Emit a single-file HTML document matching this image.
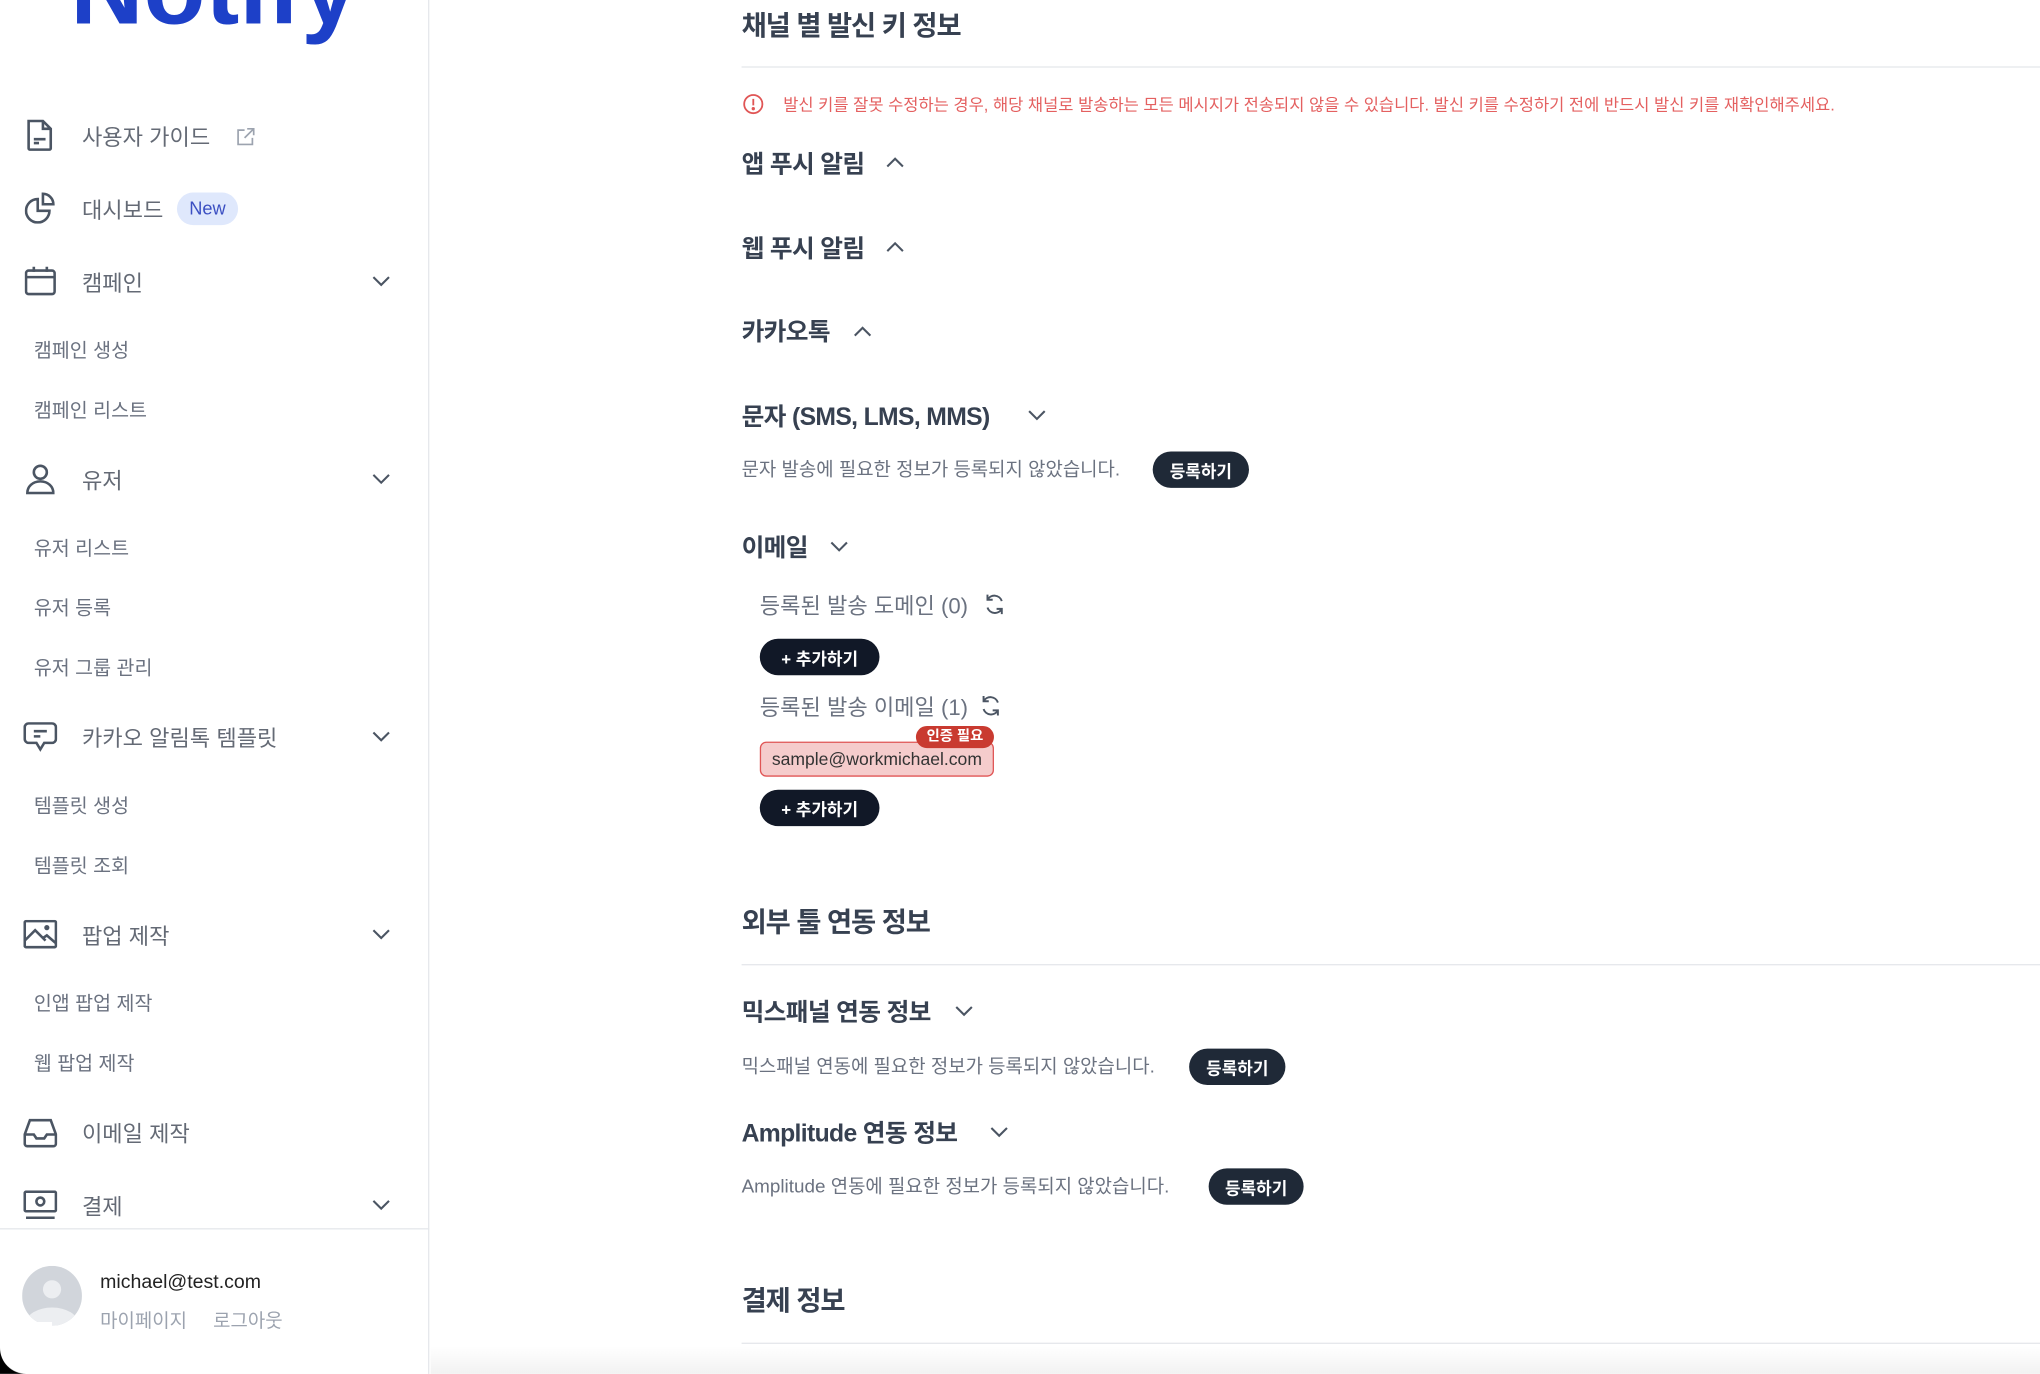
<!DOCTYPE html>
<html><head><meta charset="utf-8"><style>
*{margin:0;padding:0;box-sizing:border-box}
html,body{width:2040px;height:1374px;overflow:hidden;background:#fff}
#w{position:absolute;left:0;top:0;width:1568px;height:1056px;transform:scale(1.30102);transform-origin:0 0;font-family:"Liberation Sans","Noto Sans CJK KR",sans-serif;}
.a{position:absolute;white-space:nowrap}
.side{position:absolute;left:0;top:0;width:330px;height:1056px;border-right:1px solid #e5e7eb}
.logo{left:54px;top:-54px;font-size:78px;font-weight:bold;color:#1d40c8;letter-spacing:0px}
.mi{left:63px;font-size:17px;color:#646a75;transform:translateY(-50%)}
.sub{left:26px;font-size:15px;color:#6b7280;transform:translateY(-50%)}
.ic{position:absolute;transform:translateY(-50%)}
.chev{position:absolute;left:285px;transform:translateY(-50%)}
.h1{left:570px;font-size:21px;font-weight:bold;color:#374151;transform:translateY(-50%);letter-spacing:-0.8px}
.h2{left:570px;font-size:19px;font-weight:bold;color:#374151;transform:translateY(-50%);letter-spacing:-0.5px}
.line{position:absolute;left:570px;right:0;height:1px;background:#e5e7eb}
.t{font-size:14.5px;color:#6b7280;transform:translateY(-50%)}
.btn{position:absolute;height:28px;border-radius:14px;background:#1f2937;color:#fff;font-size:13px;font-weight:bold;display:flex;align-items:center;justify-content:center}
.btn2{background:#111827}
</style></head><body><div id="w">
<div class="side"></div>
<div class="a logo">Notify</div>

<svg class="ic" style="left:20px;top:104px" width="22" height="26" viewBox="0 0 22 26" fill="none" stroke="#4b5563" stroke-width="2"><path d="M2 2h11l6 6v15a1 1 0 0 1-1 1H3a1 1 0 0 1-1-1z"/><path d="M13 2v6h6M6 16h9M6 19h4"/></svg>
<div class="a mi" style="top:104px">사용자 가이드</div>
<svg class="ic" style="left:182px;top:105px" width="14" height="14" viewBox="0 0 14 14" fill="none" stroke="#9ca3af" stroke-width="1.3"><path d="M6 2H1v11h11V8M8 1h5v5M13 1L6 8"/></svg>

<svg class="ic" style="left:19px;top:160px" width="24" height="24" viewBox="0 0 24 24" fill="none" stroke="#4b5563" stroke-width="2"><path d="M10 5a9 9 0 1 0 9 9h-9z"/><path d="M14 1a8 8 0 0 1 8 8h-8z"/></svg>
<div class="a mi" style="top:160px">대시보드</div>
<div class="a" style="left:136px;top:148px;width:47px;height:25px;border-radius:13px;background:#dfe8fc;color:#3b4fc2;font-size:14px;text-align:center;line-height:25px">New</div>

<svg class="ic" style="left:19px;top:216px" width="24" height="24" viewBox="0 0 24 24" fill="none" stroke="#4b5563" stroke-width="2"><rect x="1" y="4" width="22" height="18" rx="2"/><path d="M1 9h22M7 1v4M17 1v4"/></svg>
<div class="a mi" style="top:216px">캠페인</div>
<svg class="chev" style="top:216px" width="16" height="10" viewBox="0 0 16 10" fill="none" stroke="#4b5563" stroke-width="1.6"><path d="M2 2l6 6 6-6"/></svg>
<div class="a sub" style="top:269px">캠페인 생성</div>
<div class="a sub" style="top:315px">캠페인 리스트</div>

<svg class="ic" style="left:20px;top:368px" width="22" height="24" viewBox="0 0 22 24" fill="none" stroke="#4b5563" stroke-width="2"><circle cx="11" cy="7" r="5"/><path d="M1 23c0-5 4-9 10-9s10 4 10 9z"/></svg>
<div class="a mi" style="top:368px">유저</div>
<svg class="chev" style="top:368px" width="16" height="10" viewBox="0 0 16 10" fill="none" stroke="#4b5563" stroke-width="1.6"><path d="M2 2l6 6 6-6"/></svg>
<div class="a sub" style="top:421px">유저 리스트</div>
<div class="a sub" style="top:467px">유저 등록</div>
<div class="a sub" style="top:513px">유저 그룹 관리</div>

<svg class="ic" style="left:18px;top:567px" width="26" height="24" viewBox="0 0 26 24" fill="none" stroke="#4b5563" stroke-width="2"><path d="M4 1h18a3 3 0 0 1 3 3v9a3 3 0 0 1-3 3h-6l-3 5-3-5H4a3 3 0 0 1-3-3V4a3 3 0 0 1 3-3z"/><path d="M8 7h10M8 11h5"/></svg>
<div class="a mi" style="top:566px">카카오 알림톡 템플릿</div>
<svg class="chev" style="top:566px" width="16" height="10" viewBox="0 0 16 10" fill="none" stroke="#4b5563" stroke-width="1.6"><path d="M2 2l6 6 6-6"/></svg>
<div class="a sub" style="top:619px">템플릿 생성</div>
<div class="a sub" style="top:665px">템플릿 조회</div>

<svg class="ic" style="left:18px;top:718px" width="26" height="22" viewBox="0 0 26 22" fill="none" stroke="#4b5563" stroke-width="2"><rect x="1" y="1" width="24" height="20" rx="1"/><path d="M1 16l8-8 8 8M15 14l3-2 7 6"/><circle cx="18" cy="6" r="1" fill="#4b5563"/></svg>
<div class="a mi" style="top:718px">팝업 제작</div>
<svg class="chev" style="top:718px" width="16" height="10" viewBox="0 0 16 10" fill="none" stroke="#4b5563" stroke-width="1.6"><path d="M2 2l6 6 6-6"/></svg>
<div class="a sub" style="top:771px">인앱 팝업 제작</div>
<div class="a sub" style="top:817px">웹 팝업 제작</div>

<svg class="ic" style="left:18px;top:871px" width="26" height="24" viewBox="0 0 26 24" fill="none" stroke="#4b5563" stroke-width="2"><path d="M5 2h16l4 11v7a2 2 0 0 1-2 2H3a2 2 0 0 1-2-2v-7z"/><path d="M1 13h7l2 3h6l2-3h7"/></svg>
<div class="a mi" style="top:870px">이메일 제작</div>

<svg class="ic" style="left:18px;top:927px" width="26" height="24" viewBox="0 0 26 24" fill="none" stroke="#4b5563" stroke-width="2"><rect x="1" y="1" width="24" height="15" rx="1"/><circle cx="13" cy="8.5" r="3"/><path d="M2 21h22"/></svg>
<div class="a mi" style="top:926px">결제</div>
<svg class="chev" style="top:926px" width="16" height="10" viewBox="0 0 16 10" fill="none" stroke="#4b5563" stroke-width="1.6"><path d="M2 2l6 6 6-6"/></svg>

<div class="a" style="left:0;top:944px;width:330px;height:1px;background:#e5e7eb"></div>
<svg class="a" style="left:17px;top:973px" width="46" height="46" viewBox="0 0 46 46"><defs><clipPath id="c"><circle cx="23" cy="23" r="23"/></clipPath></defs><circle cx="23" cy="23" r="23" fill="#d1d5db"/><g clip-path="url(#c)" fill="#eceef1"><circle cx="23" cy="18" r="7"/><ellipse cx="23" cy="44" rx="20" ry="12"/></g></svg>
<div class="a" style="left:77px;top:977px;font-size:15px;color:#222">michael@test.com</div>
<div class="a" style="left:77px;top:1004px;font-size:14.5px;color:#9ca3af">마이페이지 &nbsp;&nbsp;&nbsp;&nbsp;로그아웃</div>

<!-- main -->
<div class="a h1" style="top:19px">채널 별 발신 키 정보</div>
<div class="line" style="top:51px"></div>
<svg class="a" style="left:571px;top:72px" width="16" height="16" viewBox="0 0 16 16" fill="none" stroke="#e05555" stroke-width="1.4"><circle cx="8" cy="8" r="7"/><path d="M8 4v5"/><circle cx="8" cy="11.5" r=".6" fill="#e05555"/></svg>
<div class="a" style="left:602px;top:70px;font-size:12.7px;color:#e46060">발신 키를 잘못 수정하는 경우, 해당 채널로 발송하는 모든 메시지가 전송되지 않을 수 있습니다. 발신 키를 수정하기 전에 반드시 발신 키를 재확인해주세요.</div>

<div class="a h2" style="top:125px">앱 푸시 알림</div>
<svg class="a" style="left:681px;top:120px" width="14" height="9" viewBox="0 0 14 9" fill="none" stroke="#4b5563" stroke-width="1.6"><path d="M1 8l6-6 6 6"/></svg>
<div class="a h2" style="top:190px">웹 푸시 알림</div>
<svg class="a" style="left:681px;top:185px" width="14" height="9" viewBox="0 0 14 9" fill="none" stroke="#4b5563" stroke-width="1.6"><path d="M1 8l6-6 6 6"/></svg>
<div class="a h2" style="top:254px">카카오톡</div>
<svg class="a" style="left:656px;top:250px" width="14" height="9" viewBox="0 0 14 9" fill="none" stroke="#4b5563" stroke-width="1.6"><path d="M1 8l6-6 6 6"/></svg>
<div class="a h2" style="top:319px">문자 (SMS, LMS, MMS)</div>
<svg class="a" style="left:790px;top:315px" width="14" height="9" viewBox="0 0 14 9" fill="none" stroke="#4b5563" stroke-width="1.6"><path d="M1 1l6 6 6-6"/></svg>
<div class="a t" style="left:570px;top:360px">문자 발송에 필요한 정보가 등록되지 않았습니다.</div>
<div class="btn" style="left:886px;top:347px;width:74px">등록하기</div>

<div class="a h2" style="top:420px">이메일</div>
<svg class="a" style="left:638px;top:416px" width="14" height="9" viewBox="0 0 14 9" fill="none" stroke="#4b5563" stroke-width="1.6"><path d="M1 1l6 6 6-6"/></svg>
<div class="a t" style="left:584px;top:464px;font-size:17px">등록된 발송 도메인 (0)</div>
<svg class="a" style="left:756px;top:456px" width="17" height="17" viewBox="0 0 17 17" fill="none" stroke="#4b5563" stroke-width="1.5"><path d="M14 6A6 6 0 0 0 3 5M3 1v4h4M3 11a6 6 0 0 0 11 1M14 16v-4h-4"/></svg>
<div class="btn btn2" style="left:584px;top:491px;width:92px">+ 추가하기</div>
<div class="a t" style="left:584px;top:542px;font-size:17px">등록된 발송 이메일 (1)</div>
<svg class="a" style="left:753px;top:534px" width="17" height="17" viewBox="0 0 17 17" fill="none" stroke="#4b5563" stroke-width="1.5"><path d="M14 6A6 6 0 0 0 3 5M3 1v4h4M3 11a6 6 0 0 0 11 1M14 16v-4h-4"/></svg>
<div class="a" style="left:584px;top:570px;width:180px;height:27px;background:#f5cccc;border:1px solid #e05555;border-radius:5px;font-size:13.5px;color:#333;line-height:25px;text-align:center">sample@workmichael.com</div>
<div class="a" style="left:704px;top:558px;width:60px;height:17px;background:#c93a30;border-radius:9px;color:#fff;font-size:11px;font-weight:bold;text-align:center;line-height:17px">인증 필요</div>
<div class="btn btn2" style="left:584px;top:607px;width:92px">+ 추가하기</div>

<div class="a h1" style="top:708px">외부 툴 연동 정보</div>
<div class="line" style="top:741px"></div>
<div class="a h2" style="top:777px">믹스패널 연동 정보</div>
<svg class="a" style="left:734px;top:773px" width="14" height="9" viewBox="0 0 14 9" fill="none" stroke="#4b5563" stroke-width="1.6"><path d="M1 1l6 6 6-6"/></svg>
<div class="a t" style="left:570px;top:819px">믹스패널 연동에 필요한 정보가 등록되지 않았습니다.</div>
<div class="btn" style="left:914px;top:806px;width:74px">등록하기</div>
<div class="a h2" style="top:870px">Amplitude 연동 정보</div>
<svg class="a" style="left:761px;top:866px" width="14" height="9" viewBox="0 0 14 9" fill="none" stroke="#4b5563" stroke-width="1.6"><path d="M1 1l6 6 6-6"/></svg>
<div class="a t" style="left:570px;top:911px">Amplitude 연동에 필요한 정보가 등록되지 않았습니다.</div>
<div class="btn" style="left:929px;top:898px;width:73px">등록하기</div>

<div class="a h1" style="top:999px">결제 정보</div>
<div class="line" style="top:1032px"></div>
<div class="a" style="left:331px;right:0;top:1035px;height:21px;background:linear-gradient(#fff,#f2f2f2)"></div>
<div class="a" style="left:0;top:1036px;width:20px;height:20px;background:#000"></div>
<div class="a" style="left:0;top:1016px;width:40px;height:40px;background:#fff;border-bottom-left-radius:20px"></div>
</div></body></html>
